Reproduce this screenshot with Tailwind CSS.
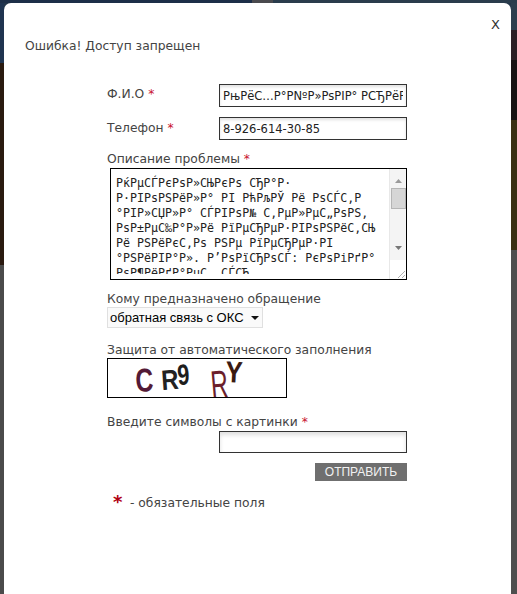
<!DOCTYPE html>
<html lang="ru">
<head>
<meta charset="utf-8">
<title>Ошибка</title>
<script src="https://cdn.jsdelivr.net/npm/@tailwindcss/browser@4"></script>
</head>
<body class="m-0 bg-[#4b4b4b] overflow-hidden">
<div class="w-[517px] h-[594px] flex flex-col overflow-hidden font-['DejaVu_Sans','Liberation_Sans',sans-serif] text-[#444] text-[12.3px]">
  <div class="h-[3px] flex shrink-0">
    <div class="w-[252px] bg-[#1d2f48]"></div>
    <div class="w-[21px] bg-[#4a4a4e]"></div>
    <div class="flex-1 bg-[#2a3c4c]"></div>
  </div>
  <div class="flex flex-1 bg-[#25374a]">
    <div class="w-[4px] flex flex-col shrink-0">
      <div class="h-[60px] bg-[#1f3450]"></div>
      <div class="h-[202px] bg-[#2a1a10]"></div>
      <div class="flex-1 bg-[#4b4b4b]"></div>
    </div>
    <main class="w-[507px] h-[591px] bg-white rounded-t-[7px] shrink-0 flex flex-col">
      <div class="flex justify-end pr-[11px] pt-[14px] h-[32px] text-[13px] text-[#333] leading-[15px]">X</div>
      <h1 class="pl-[21px] pt-[4px] h-[49px] font-normal leading-[15px]">Ошибка! Доступ запрещен</h1>
      <form class="pl-[103px] w-[403px] flex flex-col">
        <div class="flex justify-between items-start h-[33px]">
          <label class="leading-[15px] pt-[3px]">Ф.И.О <span class="text-[#c8102e]">*</span></label>
          <input readonly value="РњРёС…Р°РNºР»РѕРІР° РСЂРёРЅР°" class="w-[188px] h-[23px] border border-[#333] px-[3px] text-[11.5px] text-[#222] shadow-[inset_0_2px_3px_rgba(0,0,0,0.12)] outline-none">
        </div>
        <div class="flex justify-between items-start h-[28px]">
          <label class="leading-[15px] pt-[4px]">Телефон <span class="text-[#c8102e]">*</span></label>
          <input readonly value="8-926-614-30-85" class="w-[188px] h-[23px] border border-[#333] px-[3px] text-[11.5px] text-[#222] shadow-[inset_0_2px_3px_rgba(0,0,0,0.12)] outline-none">
        </div>
        <label class="mt-[7px] leading-[15px] h-[16px]">Описание проблемы <span class="text-[#c8102e]">*</span></label>
        <div class="ml-[3px] w-[297px] h-[112px] border border-black flex overflow-hidden">
          <div class="flex-1 h-[105px] overflow-hidden whitespace-pre pl-[5px] pt-[7px] font-['DejaVu_Sans_Mono','Liberation_Mono',monospace] text-[11.65px] leading-[15px] text-[#222]">РќРµСЃРєРѕР»СЊРєРѕ СЂР°Р·
Р·РІРѕРЅРёР»Р° РІ РћРљРЎ Рё РѕСЃС‚Р
°РІР»СЏР»Р° СЃРІРѕР№ С‚РµР»РµС„РѕРЅ,
РѕР±РµС‰Р°Р»Рё РїРµСЂРµР·РІРѕРЅРёС‚СЊ
Рё РЅРёРєС‚Рѕ РЅРµ РїРµСЂРµР·РІ
°РЅРёРІР°Р». Р’РѕРїСЂРѕСЃ: РєРѕРіРґР°
РѕР¶РёРґР°РµС‚ СЃСЋ</div>
          <div class="w-[17px] shrink-0 bg-[#f4f4f4] border-l border-[#e8e8e8] flex flex-col items-center">
            <div class="h-[14px] flex items-end justify-center"><svg width="7" height="4" viewBox="0 0 7 4"><path d="M0 4 3.5 0 7 4Z" fill="#9a9a9a"/></svg></div>
            <div class="mt-[5px] w-[15px] h-[21px] bg-[#d6d6d6] border border-[#b5b5b5]"></div>
            <div class="mt-[37px] h-[14px] flex items-start justify-center"><svg width="7" height="4" viewBox="0 0 7 4"><path d="M0 0 3.5 4 7 0Z" fill="#777"/></svg></div>
            <div class="w-full flex-1 bg-white flex items-end justify-end"><svg width="10" height="10" viewBox="0 0 10 10"><path d="M9 2 2 9M9 6 6 9" stroke="#b0b0b0" fill="none"/></svg></div>
          </div>
        </div>
        <label class="mt-[12px] leading-[15px]">Кому предназначено обращение</label>
        <div class="w-[156px] h-[21px] border border-[#e0e0e0] bg-[#fafafa] flex items-center justify-between pl-[2px] pr-[3px] font-['Liberation_Sans',sans-serif] text-[13px] text-black whitespace-nowrap">
          <span>обратная связь с ОКС</span>
          <svg width="8" height="4" viewBox="0 0 8 4"><path d="M0 0H8L4 4Z" fill="#111"/></svg>
        </div>
        <label class="mt-[15px] leading-[15px]">Защита от автоматического заполнения</label>
        <svg class="block" width="180" height="40" viewBox="0 0 180 40" role="img" aria-label="CR9 RY">
          <g font-family="Liberation Sans" font-weight="bold">
            <text x="0" y="0" font-size="33" fill="#531a36" transform="translate(29 34) rotate(-3) scale(0.75 1)">C</text>
            <text x="0" y="0" font-size="28" fill="#222" transform="translate(55 32) rotate(-4) scale(0.85 1)">R</text>
            <text x="0" y="0" font-size="29" fill="#1d1d1d" transform="translate(71 27) rotate(-4) scale(0.75 1)">9</text>
            <text x="0" y="0" font-size="40" fill="#6b1f2c" font-weight="normal" transform="translate(105 41) rotate(-5) scale(0.6 1)">R</text>
            <text x="0" y="0" font-size="30" fill="#3a1a12" transform="translate(118 24) rotate(3) scale(0.85 1)">Y</text>
          </g>
          <rect x="0.5" y="0.5" width="179" height="39" fill="none" stroke="#000"/>
        </svg>
        <label class="mt-[17px] leading-[15px]">Введите символы с картинки <span class="text-[#c8102e]">*</span></label>
        <div class="flex justify-end mt-[1px]">
          <input readonly class="w-[188px] h-[22px] border border-[#333] shadow-[inset_0_3px_4px_rgba(0,0,0,0.13)] outline-none">
        </div>
        <div class="flex justify-end mt-[10px]">
          <button type="button" class="w-[92px] h-[18px] bg-[#6f6f6f] text-[#f2f2f2] font-['Liberation_Sans',sans-serif] text-[12px] leading-[18px]">ОТПРАВИТЬ</button>
        </div>
        <div class="flex items-start mt-[9px] pl-[6px]">
          <span class="font-bold text-[#b00012] text-[18px] leading-[24px] w-[17px]">*</span>
          <span class="pt-[6px] leading-[15px]">- обязательные поля</span>
        </div>
      </form>
    </main>
    <div class="w-[6px] flex flex-col shrink-0">
      <div class="h-[27px] bg-[#2c3e4e]"></div>
      <div class="h-[30px] bg-[#2b2026]"></div>
      <div class="h-[60px] bg-[#171212]"></div>
      <div class="h-[130px] bg-[#3a3012]"></div>
      <div class="flex-1 bg-[#4e4e4e]"></div>
    </div>
  </div>
</div>
</body>
</html>
